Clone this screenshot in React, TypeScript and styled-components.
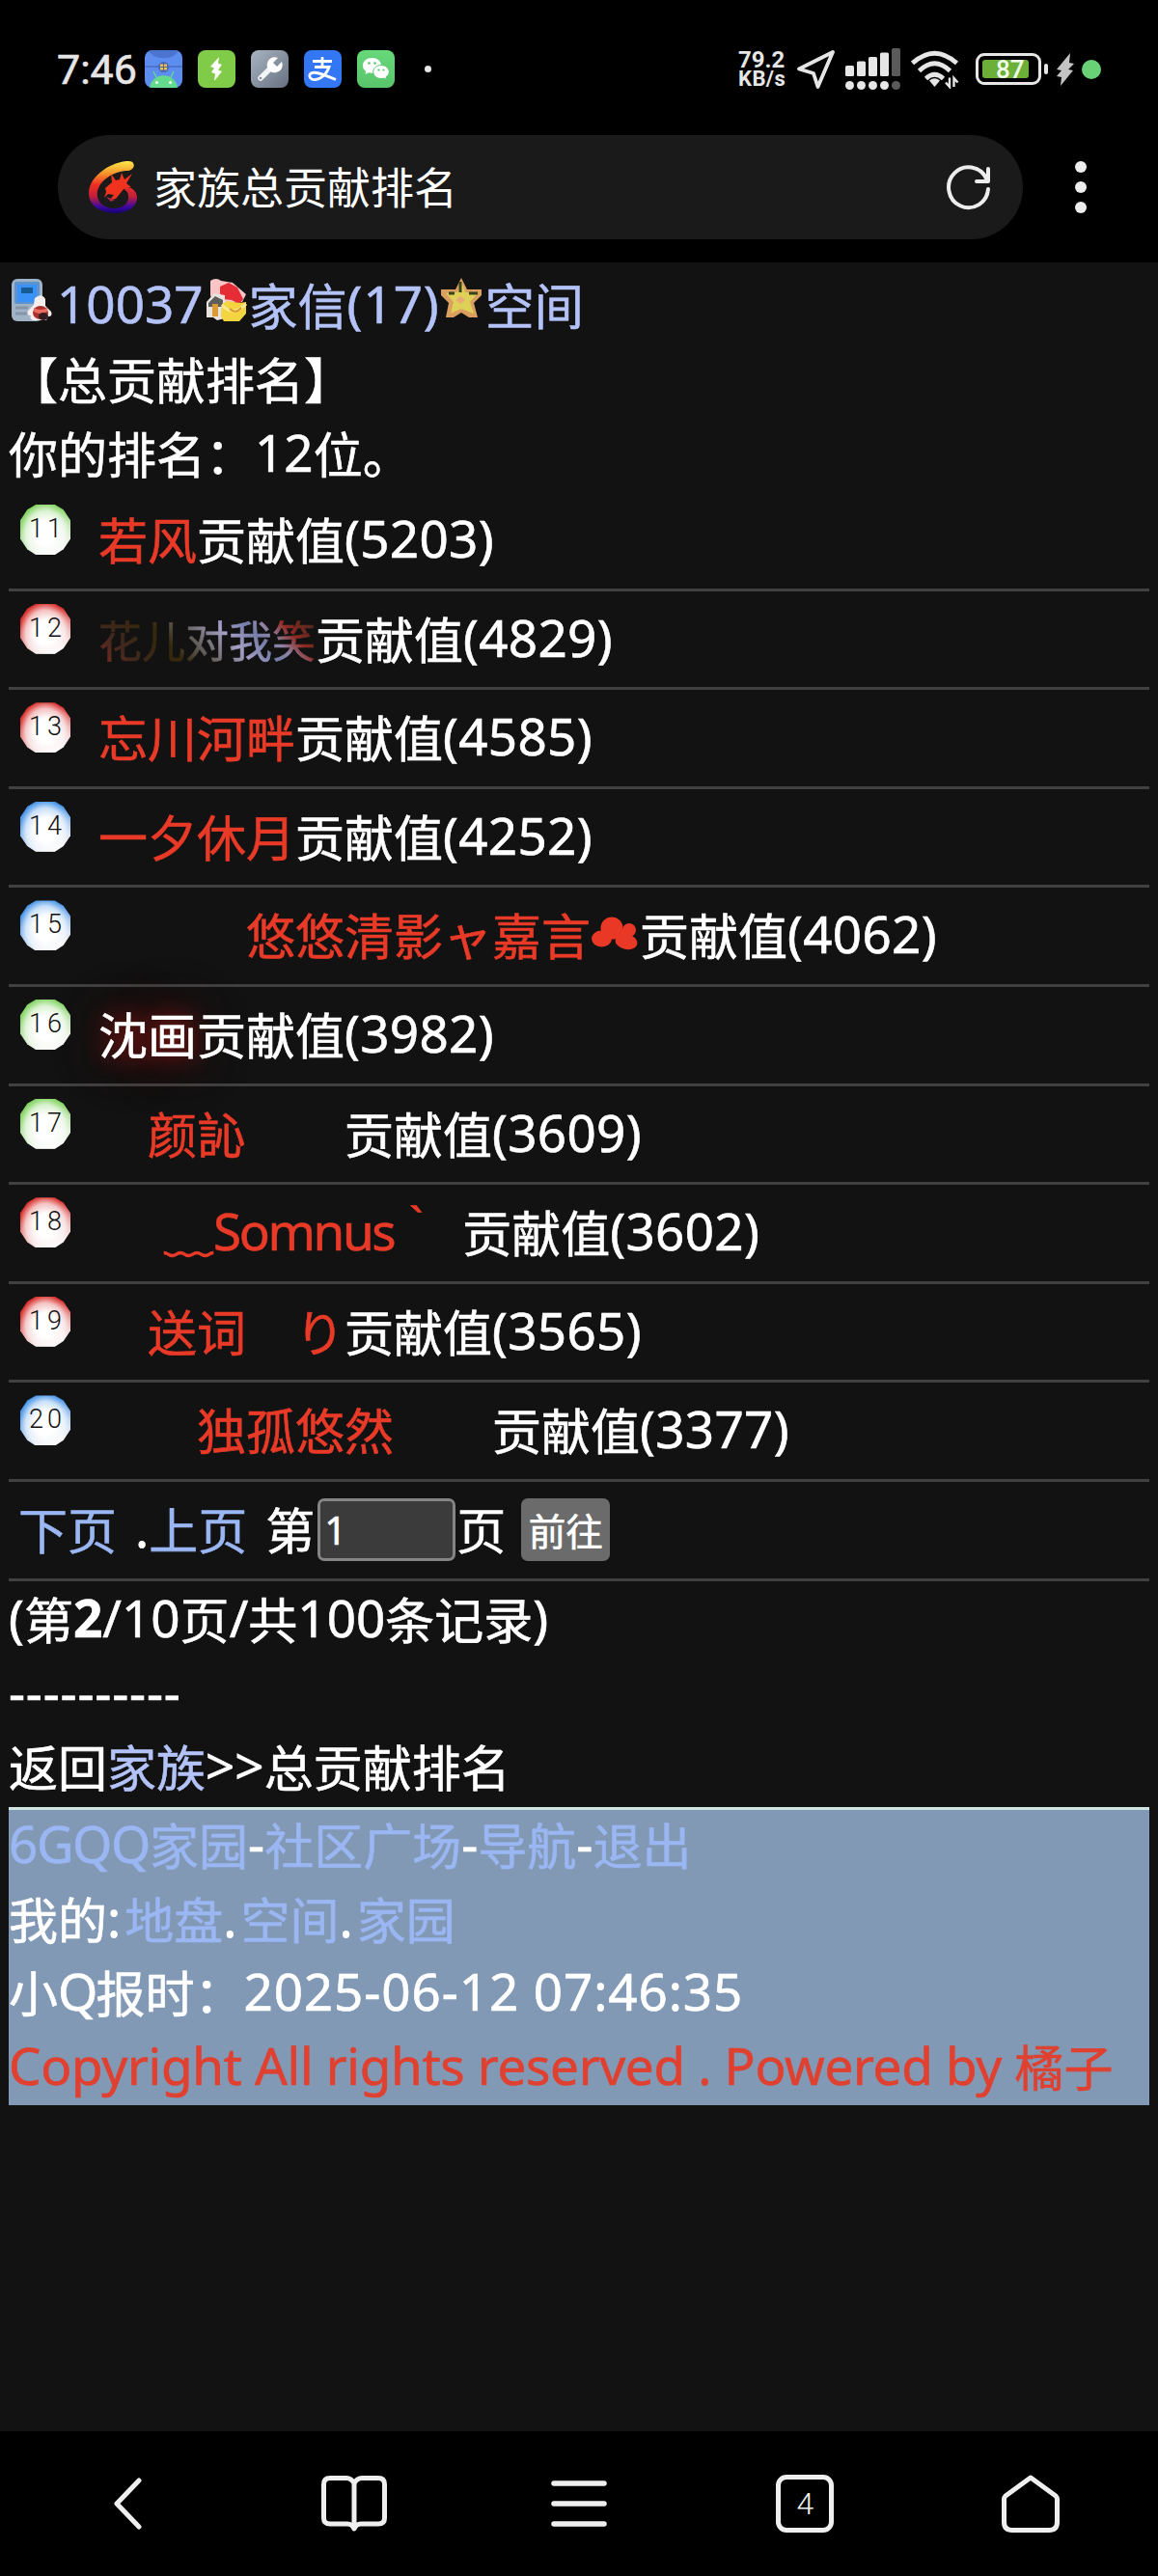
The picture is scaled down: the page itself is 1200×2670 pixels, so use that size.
import React from "react";
import styled, { createGlobalStyle, css } from "styled-components";

const Global = createGlobalStyle`
  * { box-sizing: border-box; }
  body { margin: 0; background: #121212; }
`;

const LATIN = '"Noto Sans", "Noto Sans CJK SC", sans-serif';
const HAN = '"Noto Sans CJK SC", "Noto Sans", sans-serif';

const Screen = styled.div`
  width: 1200px;
  height: 2670px;
  display: flex;
  flex-direction: column;
  overflow: hidden;
  background: #121212;
  color: #fff;
  font-family: ${HAN};
`;

/* ---------- top chrome ---------- */

const TopChrome = styled.header`
  height: 272px;
  flex: none;
  background: #000;
`;

const StatusBar = styled.div`
  height: 140px;
  padding: 3px 59px 0 59px;
  display: flex;
  align-items: center;
  justify-content: space-between;
`;

const StatusGroup = styled.div`
  display: flex;
  align-items: center;
`;

const Clock = styled.span`
  width: 91px;
  font: 400 43px/50px Roboto, sans-serif;
  color: #e6e6e6;
  -webkit-text-stroke: 0.6px #e6e6e6;
`;

const AppIcons = styled.div`
  display: flex;
  gap: 16px;
`;

const AppTile = styled.span<{ $bg: string }>`
  width: 39px;
  height: 39px;
  border-radius: 8px;
  overflow: hidden;
  background: ${(p) => p.$bg};
  svg { display: block; }
`;

const MoreDot = styled.span`
  width: 7px;
  height: 7px;
  margin-left: 31px;
  border-radius: 50%;
  background: #e6e6e6;
`;

const NetSpeed = styled.div`
  width: 61px;
  display: flex;
  flex-direction: column;
  padding-top: 1px;
  font: 700 24px/20px Roboto, sans-serif;
  color: #e6e6e6;
  span + span { font-size: 22px; letter-spacing: 0.4px; }
`;

const Battery = styled.div`
  width: 68px;
  height: 33px;
  margin-left: 17px;
  padding: 4px;
  border: 3px solid #e6e6e6;
  border-radius: 9px;
  display: flex;
`;

const BatteryLevel = styled.div`
  width: 48px;
  height: 19px;
  border-radius: 3px;
  padding-left: 14px;
  background: #6cb03a;
  font: 500 26px/20px Roboto, sans-serif;
  color: #f0fbe8;
`;

const BatteryCap = styled.span`
  width: 4px;
  height: 11px;
  margin: 0 8px 0 3px;
  border-radius: 2px;
  background: #e6e6e6;
`;

const ActiveDot = styled.span`
  width: 20px;
  height: 20px;
  margin-left: 7px;
  border-radius: 50%;
  background: #69d277;
`;

const AddressRow = styled.div`
  display: flex;
  align-items: center;
  padding-left: 60px;
`;

const AddressPill = styled.div`
  width: 1000px;
  height: 108px;
  padding: 0 33px 0 31px;
  border-radius: 54px;
  display: flex;
  align-items: center;
  background: #1a1a1a;
`;

const PageTitle = styled.h1`
  flex: 1;
  margin: 0 0 3px 16px;
  font: 400 45px/60px ${HAN};
`;

const OverflowMenu = styled.div`
  width: 120px;
  display: flex;
  flex-direction: column;
  align-items: center;
  gap: 9px;
  span {
    width: 12px;
    height: 12px;
    border-radius: 50%;
    background: #ededed;
  }
`;

/* ---------- page ---------- */

const Page = styled.main`
  flex: 1;
  padding: 5px 9px 0;
  font-size: 51px;
  white-space: pre;
  -webkit-text-stroke: 0.6px;
`;

const Line = styled.div`
  height: 76.7px;
  display: flex;
  align-items: center;
  line-height: 76px;
`;

const Latin = styled.span<{ $spacing?: number; $bold?: boolean }>`
  font-family: ${LATIN};
  font-size: 53px;
  letter-spacing: ${(p) => p.$spacing ?? 0}px;
  font-weight: ${(p) => (p.$bold ? 700 : 400)};
`;

const Link = styled.a<{ $visited?: boolean }>`
  color: ${(p) => (p.$visited ? "#b3c2f7" : "#9ab6f3")};
  display: inline-flex;
  align-items: center;
`;

const InlineIcon = styled.span<{ $w: number; $pad?: number }>`
  width: ${(p) => p.$w}px;
  height: 54px;
  padding-left: ${(p) => p.$pad ?? 0}px;
  display: block;
  svg { display: block; }
`;

const List = styled.ul`
  margin: 0;
  padding: 3px 0 0;
  list-style: none;
`;

const rowBox = css`
  height: 102.6px;
  border-bottom: 3px solid #414142;
  display: flex;
`;

const Row = styled.li`
  ${rowBox}
  padding: 10px 0 0 12px;
  line-height: 76px;
`;

const badgeTones = {
  green: "#84d465",
  red: "#d8322f",
  blue: "#4795e8",
};
type Tone = keyof typeof badgeTones;

const Badge = styled.span<{ $tone: Tone }>`
  width: 52px;
  height: 52px;
  margin: 3px 29px 0 0;
  flex: none;
  padding-left: 4px;
  clip-path: polygon(31% 0, 69% 0, 86% 10%, 100% 31%, 100% 68%, 86% 89%, 69% 100%, 31% 100%, 14% 89%, 0 68%, 0 31%, 14% 10%);
  background:
    radial-gradient(ellipse at 50% 56%, #fff 0 30%, rgba(255, 255, 255, 0.7) 55%, transparent 74%),
    linear-gradient(155deg, ${(p) => badgeTones[p.$tone]} 0 30%, #f6f2f4 88%);
  font: 300 27px/51px Roboto, sans-serif;
  letter-spacing: 4px;
  text-align: center;
  color: #111;
  -webkit-text-stroke: 0;
`;

const RowText = styled.div`
  display: flex;
  align-items: center;
  height: 76px;
`;

type Effect = "plain" | "rainbow" | "glow";

const Name = styled.a<{ $effect: Effect; $indent: number }>`
  display: inline-flex;
  align-items: center;
  color: #e93a28;
  margin-left: ${(p) => p.$indent}px;
  ${(p) =>
    p.$effect === "rainbow" &&
    css`
      padding-top: 4px;
      font-size: 45px;
      line-height: 66px;
      color: transparent;
      background: linear-gradient(48deg, #8a2c22 0%, #40281d 16%, #33280b 34%, #6f6b6d 47%, #a69fc6 58%, #747da8 69%, #8f86a8 74%, #8f2a22 82%, #57281e 91%, #33230f 100%);
      -webkit-background-clip: text;
      background-clip: text;
    `}
  ${(p) =>
    p.$effect === "glow" &&
    css`
      color: #fff;
      text-shadow: 0 0 20px rgba(200, 24, 20, 0.6), 0 0 40px rgba(190, 24, 20, 0.55), 0 0 80px rgba(170, 24, 20, 0.3);
    `}
`;

const Pager = styled.div`
  ${rowBox}
  align-items: center;
  padding: 0 0 4px 10px;
  line-height: 76px;
`;

const PageInput = styled.input`
  width: 143px;
  height: 65px;
  margin: 3px 1px 0 3px;
  padding: 0 4px;
  border: 3px solid #858585;
  border-radius: 7px;
  background: #3b3b3b;
  color: #fff;
  font: 400 40px/56px "Noto Sans", sans-serif;
  outline: none;
`;

const GoButton = styled.button`
  width: 92px;
  height: 65px;
  margin: 3px 0 0 16px;
  padding: 0;
  border: 0;
  border-radius: 7px;
  background: #6b6b6b;
  color: #fff;
  font: 400 38.5px/60px ${HAN};
`;

const Gap = styled.span<{ $w: number }>`
  width: ${(p) => p.$w}px;
`;

const Footer = styled.footer`
  margin-top: 4px;
  border-top: 3px solid #cfe5e2;
  height: 309px;
  background: #8299b5;
`;

const FooterLines = styled.div`
  margin-top: -3px;
`;

const Copyright = styled(Line)`
  color: #e0402f;
`;

/* ---------- bottom navigation ---------- */

const BottomNav = styled.nav`
  height: 150px;
  flex: none;
  padding: 0 15px 0 16px;
  display: grid;
  grid-template-columns: repeat(5, 1fr);
  align-items: center;
  justify-items: center;
  background: #000;
  svg { display: block; }
`;

const TabCount = styled.div`
  width: 60px;
  height: 60px;
  border: 5px solid #efefef;
  border-radius: 11px;
  font: 300 32px/51px Roboto, sans-serif;
  text-align: center;
  color: #efefef;
`;

/* ---------- drawings ---------- */

const RobotIcon = () => (
  <svg width="39" height="39" viewBox="0 0 39 39">
    <path d="M4 0C8 11 31 11 35 0z" fill="#4a74cf" />
    <path d="M0 17h39" stroke="#4a74cf" strokeWidth="2" />
    <circle cx="19.5" cy="17.5" r="5.5" fill="#4a68b4" />
    <path d="M16 14.500h7v6h-7z" fill="#e9c05a" />
    <path d="M19.500 14v7M16 17.500h7" stroke="#5c6480" strokeWidth="1" />
    <path d="M5 39C7 22 32 22 34 39z" fill="#63da8c" />
    <path d="M12 28l-3-6M27 28l3-6" stroke="#63da8c" strokeWidth="1.400" />
    <circle cx="12.500" cy="33.500" r="1.500" fill="#fff" />
    <circle cx="26.500" cy="33.500" r="1.500" fill="#fff" />
  </svg>
);

const FlashIcon = () => (
  <svg width="39" height="39" viewBox="0 0 39 39">
    <path d="M22 7L13 17l4 1.500L14 23l4 1.500L17 32l8-10-4-1.500L25 15l-4-1.500z" fill="#fff" />
  </svg>
);

const WrenchIcon = () => (
  <svg width="39" height="39" viewBox="0 0 39 39">
    <path d="M10 29L22 17" stroke="#f2f4f6" strokeWidth="5.500" strokeLinecap="round" />
    <path d="M28 8a8 8 0 1 0 4 4l-5 5-4-4z" fill="#fff" />
    <circle cx="10" cy="29" r="1.300" fill="#8290a0" />
  </svg>
);

const PayIcon = () => (
  <svg width="39" height="39" viewBox="0 0 39 39" fill="none" stroke="#fff">
    <path d="M9 11.500h20M19 7v10M11 17.500h15c-2 6-7 12-14 13-5 .5-7-3-6-5 2-4 8-3 27 5" strokeWidth="2.800" />
  </svg>
);

const ChatIcon = () => (
  <svg width="39" height="39" viewBox="0 0 39 39">
    <path d="M15.500 8C10 8 6 11.500 6 16c0 2.500 1.300 4.500 3.200 6L8.500 25l3.500-1.700c5 1.500 13-1 13-7.300 0-4.500-4-8-9.500-8z" fill="#fff" />
    <path d="M25 15.500c-4.600 0-8.300 3.100-8.300 7s3.700 7 8.300 7c1 0 2-.2 2.900-.4l2.700 1.400-.6-2.600c2-1.300 3.300-3.200 3.300-5.400 0-3.900-3.700-7-8.300-7z" fill="#fff" stroke="#5ac66c" strokeWidth="1" />
    <g fill="#5ac66c">
      <circle cx="12.500" cy="13.500" r="1.300" />
      <circle cx="18.500" cy="13.500" r="1.300" />
      <circle cx="22.500" cy="20.500" r="1.100" />
      <circle cx="27.500" cy="20.500" r="1.100" />
    </g>
  </svg>
);

const LocationIcon = () => (
  <svg width="39" height="40" viewBox="0 0 39 40">
    <path d="M37 2L2 19.500l15 4.500 4.500 14z" fill="none" stroke="#e6e6e6" strokeWidth="3.800" strokeLinejoin="round" />
  </svg>
);

const SignalIcon = () => (
  <svg width="58" height="44" viewBox="0 0 58 44" style={{ marginLeft: 11 }}>
    {[18, 13.5, 9, 4.5, 0].map((top, i) => (
      <g key={top} fill={i === 4 ? "#5a5a5a" : "#e6e6e6"}>
        <rect x={i * 12} y={top} width="9" height={29 - top} rx="1.500" />
        <circle cx={i * 12 + 4.5} cy="38.500" r="4.500" />
      </g>
    ))}
  </svg>
);

const WifiIcon = () => (
  <svg width="50" height="40" viewBox="0 0 50 40" style={{ marginLeft: 10 }}>
    <g fill="none" stroke="#e6e6e6" strokeWidth="4.800">
      <path d="M1.500 13.500Q24.500-7 47.500 13.500" />
      <path d="M8.500 21.500Q24.500 6 40.500 21.500" />
      <path d="M15.500 29.500Q24.500 21 33.500 29.500" />
    </g>
    <path d="M19 31.500q5.500-4.500 11 0L24.500 38z" fill="#e6e6e6" />
    <path d="M40 28.500v9.500l-4-4.500M44.500 38v-9l4 4.500" fill="none" stroke="#e6e6e6" strokeWidth="2.400" />
  </svg>
);

const ChargeIcon = () => (
  <svg width="20" height="34" viewBox="0 0 20 34">
    <path d="M15 0L1 17l5 1-5 6 5 1-1 9 13-16-5-1 6-6-5-1z" fill="#c4c4c4" />
  </svg>
);

const SiteLogo = () => (
  <svg width="52" height="54" viewBox="0 0 52 54">
    <defs>
      <linearGradient id="flame" x1="0" y1="0" x2="0" y2="1">
        <stop offset="0" stopColor="#ffe94a" />
        <stop offset="0.220" stopColor="#f59a2c" />
        <stop offset="0.450" stopColor="#ef3022" />
        <stop offset="0.680" stopColor="#c31e3a" />
        <stop offset="0.880" stopColor="#3a08a0" />
        <stop offset="1" stopColor="#14006e" />
      </linearGradient>
    </defs>
    <path d="M47 2C49 5 47 9 42 10 30 10 14 17 10 31 8 41 16 49 27 49 38 49 43 42 42 36c0-4-3-6-6-8 7-3 15 2 15 10 0 9-10 16-23 16C13 53 1 47 1 33 1 18 20 2 40 0c3 0 6 0 7 2z" fill="url(#flame)" />
    <path d="M18 28l7-6-1-9 5 7 4-1 2-7 3 7 8-6-6 10 5 4-7 1-5 6-4 5-6 1 4-5-6-1-4 4 2-6z" fill="#f0331f" />
    <path d="M19 37l9 3-4 2z" fill="#b3254c" />
  </svg>
);

const RefreshIcon = () => (
  <svg width="46" height="48" viewBox="0 0 46 48" fill="none" stroke="#ededed" strokeWidth="4" strokeLinecap="round" strokeLinejoin="round">
    <path d="M43 26A20.500 21 0 1 1 41 15" />
    <path d="M43 5v13H31" />
  </svg>
);

const PhoneIcon = () => (
  <svg width="44" height="46" viewBox="0 0 44 46">
    <rect x="1" y="1" width="32" height="44" rx="6" fill="#9fb2c6" />
    <rect x="4" y="4" width="26" height="23" rx="2" fill="#5d93cf" />
    <rect x="7" y="7" width="20" height="18" fill="#3a91f6" />
    <rect x="11" y="10" width="12" height="6" fill="#155c94" />
    <path d="M5 31h13M5 37h12" stroke="#8596a9" strokeWidth="3" />
    <path d="M25 21q7-6 11 1v7l6 6q2 5-3 5l-2 4H23q-4-2-2-5-5 0-3-5l6-6z" fill="#f5eeec" />
    <ellipse cx="31" cy="36" rx="8" ry="7" fill="#a9302d" />
    <path d="M24 31q7 4 14 0v4q-7 4-14 0z" fill="#e96b62" />
    <ellipse cx="34" cy="40" rx="5" ry="4" fill="#311c20" />
  </svg>
);

const MailHouseIcon = () => (
  <svg width="44" height="46" viewBox="0 0 44 46">
    <path d="M5 3q6-4 11 0l12 2 14 12-4 8-30 2-3-9z" fill="#f8c4c6" />
    <path d="M15 9l9-4 9 5 6 12-4 5-8-4-9-1-3-6z" fill="#e62c35" />
    <path d="M1 25l8-9 11 2v24l-8 2-4-3H1z" fill="#e8e3dc" />
    <path d="M3 26l7-7 8 4v7H3z" fill="#5d5e5c" />
    <path d="M7 27h6v13H7z" fill="#dc9a34" />
    <path d="M17 27l6-3 12 2 7-1v12l-7 8H19l-3-5z" fill="#f4d43f" />
    <path d="M17 28q11 13 25-1" fill="none" stroke="#fbe891" strokeWidth="3" />
    <path d="M25 32q6 6 12-1" fill="none" stroke="#d99b30" strokeWidth="2" />
  </svg>
);

const StarIcon = () => (
  <svg width="43" height="42" viewBox="0 0 43 42">
    <path d="M21 0l6 12h15v6l-8 8 4 15h-9l-8-5-8 5H5l3-15-8-8v-6h15z" fill="#dba060" />
    <path d="M21 4l4 11 13 1-8 9 4 12-13-5-11 5 3-12-8-9 12-1z" fill="#dfd158" />
    <path d="M20 4v11M8 16h6M29 16h9" stroke="#384319" strokeWidth="3" />
    <path d="M15 23l5-4 5 4-5 4z" fill="#e9aa78" />
  </svg>
);

const CloudIcon = () => (
  <svg width="51" height="36" viewBox="0 0 51 36" fill="#ea3827">
    <circle cx="22" cy="12" r="11.500" />
    <circle cx="40" cy="14" r="7" />
    <ellipse cx="11.500" cy="23" rx="10.500" ry="8.500" />
    <ellipse cx="37" cy="26" rx="11.500" ry="8" transform="rotate(12 37 26)" />
    <path d="M20 12l18 2v12h-8l-5-5-9-1z" />
  </svg>
);

const BackIcon = () => (
  <svg width="30" height="54" viewBox="0 0 30 54" style={{ marginLeft: -2 }}>
    <path d="M27 3L4 27l23 24" fill="none" stroke="#efefef" strokeWidth="5" strokeLinecap="round" strokeLinejoin="round" />
  </svg>
);

const BookIcon = () => (
  <svg width="68" height="58" viewBox="0 0 68 58">
    <path d="M34 8Q31 2.500 26 2.500H9Q2.500 2.500 2.500 9v35q0 6 6.500 6h18q5 0 7 5 2-5 7-5h18q6.500 0 6.500-6V9q0-6.500-6.500-6.500H42Q37 2.500 34 8z M34 8v45" fill="none" stroke="#efefef" strokeWidth="5" strokeLinejoin="round" />
  </svg>
);

const MenuIcon = () => (
  <svg width="58" height="50" viewBox="0 0 58 50">
    <path d="M3 4h52M3 25h52M3 46h52" stroke="#efefef" strokeWidth="5.500" strokeLinecap="round" />
  </svg>
);

const HomeIcon = () => (
  <svg width="62" height="62" viewBox="0 0 62 62">
    <path d="M31 4L5 23q-1.500 1.500-1.500 3.500V50q0 8.500 8.500 8.500h38q8.500 0 8.500-8.500V26.500q0-2-1.500-3.500z" fill="none" stroke="#efefef" strokeWidth="5" strokeLinejoin="round" />
  </svg>
);

/* ---------- data ---------- */

interface Entry {
  rank: number;
  tone: Tone;
  name: React.ReactNode;
  score: number;
  effect?: Effect;
  indent?: number;
}

const entries: Entry[] = [
  { rank: 11, tone: "green", name: "若风", score: 5203 },
  { rank: 12, tone: "red", name: "花儿对我笑", score: 4829, effect: "rainbow" },
  { rank: 13, tone: "red", name: "忘川河畔", score: 4585 },
  { rank: 14, tone: "blue", name: "一夕休月", score: 4252 },
  { rank: 15, tone: "blue", name: <>悠悠清影ャ嘉言<CloudIcon /></>, score: 4062, indent: 153 },
  { rank: 16, tone: "green", name: "沈画", score: 3982, effect: "glow" },
  { rank: 17, tone: "green", name: "颜訫\u3000\u3000", score: 3609, indent: 51 },
  {
    rank: 18,
    tone: "red",
    name: <>﹏<Latin $spacing={-2.4}>Somnus</Latin>｀<Gap $w={20} /></>,
    score: 3602,
    indent: 68,
  },
  { rank: 19, tone: "red", name: "送词\u3000り", score: 3565, indent: 51 },
  { rank: 20, tone: "blue", name: "独孤悠然\u3000\u3000", score: 3377, indent: 102 },
];

export default function App() {
  return (
    <Screen>
      <Global />
      <TopChrome>
        <StatusBar>
          <StatusGroup>
            <Clock>7:46</Clock>
            <AppIcons>
              <AppTile $bg="#5e8df0"><RobotIcon /></AppTile>
              <AppTile $bg="#80cb48"><FlashIcon /></AppTile>
              <AppTile $bg="linear-gradient(135deg, #a9b4c2, #667080)"><WrenchIcon /></AppTile>
              <AppTile $bg="#3477f5"><PayIcon /></AppTile>
              <AppTile $bg="linear-gradient(#66d97a, #59c46b)"><ChatIcon /></AppTile>
            </AppIcons>
            <MoreDot />
          </StatusGroup>
          <StatusGroup>
            <NetSpeed>
              <span>79.2</span>
              <span>KB/s</span>
            </NetSpeed>
            <LocationIcon />
            <SignalIcon />
            <WifiIcon />
            <Battery>
              <BatteryLevel>87</BatteryLevel>
            </Battery>
            <BatteryCap />
            <ChargeIcon />
            <ActiveDot />
          </StatusGroup>
        </StatusBar>
        <AddressRow>
          <AddressPill>
            <SiteLogo />
            <PageTitle>家族总贡献排名</PageTitle>
            <RefreshIcon />
          </AddressPill>
          <OverflowMenu>
            <span />
            <span />
            <span />
          </OverflowMenu>
        </AddressRow>
      </TopChrome>

      <Page>
        <Line>
          <InlineIcon $w={50} $pad={2}><PhoneIcon /></InlineIcon>
          <Link $visited><Latin>10037</Latin></Link>
          <InlineIcon $w={47} $pad={2}><MailHouseIcon /></InlineIcon>
          <Link $visited>家信<Latin $spacing={0.9}>(17)</Latin></Link>
          <InlineIcon $w={47} $pad={1}><StarIcon /></InlineIcon>
          <Link $visited>空间</Link>
        </Line>
        <Line>【总贡献排名】</Line>
        <Line>你的排名：<Latin>12</Latin>位。</Line>

        <List>
          {entries.map((e) => (
            <Row key={e.rank}>
              <Badge $tone={e.tone}>{e.rank}</Badge>
              <RowText>
                <Name $effect={e.effect ?? "plain"} $indent={e.indent ?? 0}>{e.name}</Name>
                贡献值<Latin $spacing={0.3}>({e.score})</Latin>
              </RowText>
            </Row>
          ))}
        </List>

        <Pager>
          <Link>下页</Link>
          <Gap $w={19} />
          <Latin>.</Latin>
          <Link>上页</Link>
          <Gap $w={19} />
          第
          <PageInput defaultValue="1" />
          页
          <GoButton>前往</GoButton>
        </Pager>

        <Line>
          <Latin>(</Latin>第<Latin $bold>2</Latin><Latin>/10</Latin>页<Latin>/</Latin>共<Latin>100</Latin>条记录<Latin>)</Latin>
        </Line>
        <Line><Latin $spacing={0.8}>----------</Latin></Line>
        <Line>
          返回<Link $visited>家族</Link><Latin>&gt;&gt;</Latin>总贡献排名
        </Line>

        <Footer>
          <FooterLines>
            <Line>
              <Link><Latin $spacing={-1.4}>6GQQ</Latin>家园</Link><Latin>-</Latin>
              <Link>社区广场</Link><Latin>-</Latin>
              <Link>导航</Link><Latin>-</Latin>
              <Link>退出</Link>
            </Line>
            <Line>
              我的<Latin $spacing={4}>:</Latin><Link>地盘</Link><Latin $spacing={4}>.</Latin><Link>空间</Link><Latin $spacing={4}>.</Latin><Link>家园</Link>
            </Line>
            <Line>
              小<Latin $spacing={-2}>Q</Latin>报时：<Latin $spacing={0.9}>2025-06-12 07:46:35</Latin>
            </Line>
            <Copyright>
              <Latin $spacing={-0.3}>Copyright All rights reserved . Powered by </Latin>橘子
            </Copyright>
          </FooterLines>
        </Footer>
      </Page>

      <BottomNav>
        <BackIcon />
        <BookIcon />
        <MenuIcon />
        <TabCount>4</TabCount>
        <HomeIcon />
      </BottomNav>
    </Screen>
  );
}
